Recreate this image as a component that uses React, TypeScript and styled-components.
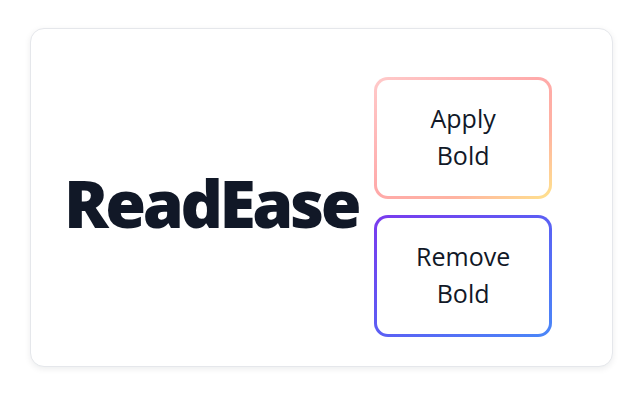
import styled, { createGlobalStyle } from 'styled-components';

const GlobalStyle = createGlobalStyle`
    html, body {
        margin: 0;
        padding: 0;
        background: #ffffff;
    }
    body {
        font-family: "Open Sans", "Noto Sans", "Liberation Sans", sans-serif;
        color: #111827;
    }
`

const Page = styled.div`
    width: 640px;
    height: 400px;
    padding: 28px 27px 33px 30px;
    box-sizing: border-box;
`

const Card = styled.div`
    height: 100%;
    box-sizing: border-box;
    background: #ffffff;
    border: 1px solid #e5e7eb;
    border-radius: 14px;
    box-shadow: 0 2px 6px rgba(17, 24, 39, 0.08);
    display: flex;
    align-items: center;
    gap: 16px;
    padding: 47px 60px 29px 33px;
`

const Title = styled.h1`
    margin: 0;
    font-family: "Open Sans", "Noto Sans", sans-serif;
    font-size: 66px;
    font-weight: 800;
    letter-spacing: -3.4px;
    color: #111827;
    line-height: 1;
    padding-bottom: 10px;
`

const Buttons = styled.div`
    display: flex;
    flex-direction: column;
    gap: 16px;
`

const GradientButton = styled.button<{ $border: string }>`
    width: 178px;
    height: 122px;
    box-sizing: border-box;
    border: 3px solid transparent;
    border-radius: 14px;
    background:
        linear-gradient(#ffffff, #ffffff) padding-box,
        ${p => p.$border} border-box;
    font-family: "Open Sans", "Noto Sans", sans-serif;
    font-size: 25px;
    font-weight: 500;
    line-height: 37px;
    color: #111827;
    cursor: pointer;
    display: flex;
    align-items: center;
    justify-content: center;
    text-align: center;
    padding: 0 34px 2px;
`

const warm = 'linear-gradient(to bottom right, #ffcaca 0%, #ffa9a9 48%, #ffb3a2 72%, #ffe38c 100%)'
const cool = 'linear-gradient(to bottom right, #7b3aee 0%, #5b5ff4 50%, #4a88f8 100%)'

function App() {
    return (
        <Page>
            <GlobalStyle />
            <Card>
                <Title>ReadEase</Title>
                <Buttons>
                    <GradientButton $border={warm}>Apply Bold</GradientButton>
                    <GradientButton $border={cool}>Remove Bold</GradientButton>
                </Buttons>
            </Card>
        </Page>
    )
}

export default App
